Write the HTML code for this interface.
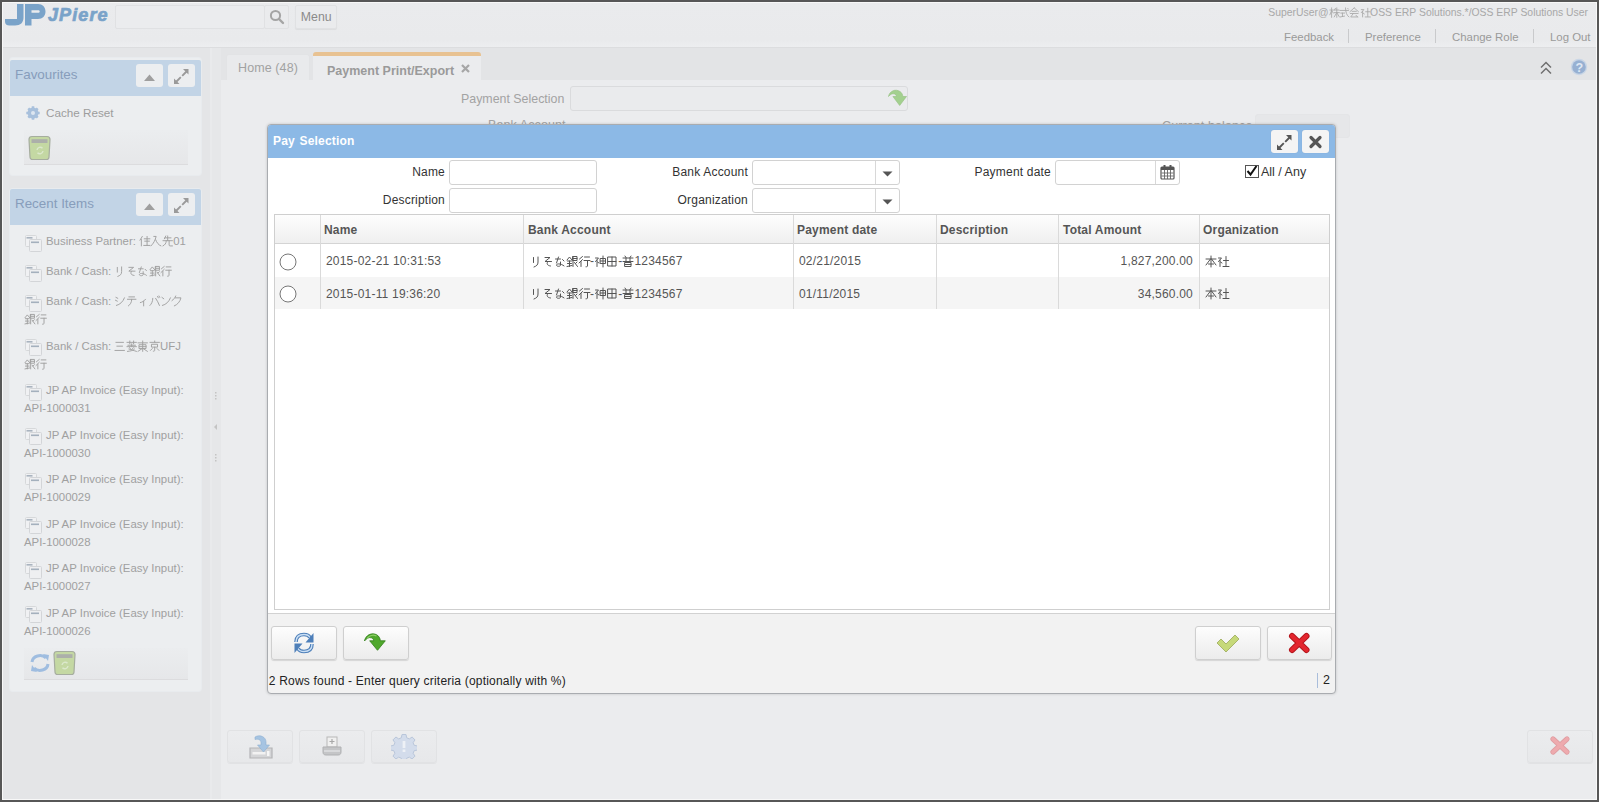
<!DOCTYPE html>
<html><head><meta charset="utf-8">
<style>
*{box-sizing:border-box;margin:0;padding:0}
html,body{width:1599px;height:802px;overflow:hidden;background:#575757}
body{font-family:"Liberation Sans",sans-serif;position:relative;font-size:12px;letter-spacing:0.2px}
.a{position:absolute}
.cj{display:inline-block;width:1em;height:1em;vertical-align:-0.13em;overflow:visible;margin-right:0}
.cj path{fill:none;stroke:currentColor;stroke-width:1;stroke-linecap:round;stroke-linejoin:round}
.t{position:absolute;white-space:nowrap;line-height:14px}
#page{left:2px;top:2px;width:1595px;height:798px;background:#f6f6f7;border:1px solid #f8f8f8}
/* header */
.hbtn{border:1px solid #e0e1e3;border-radius:2px;background:#eaebed}
.lnk{color:#9a9a9a;font-size:11.4px;letter-spacing:0}
.sep{width:1px;height:14px;background:#c9cacc}
/* left */
.panel{background:#eceef0;border-radius:3px;box-shadow:0 0 0 1px #e8ebee}
.phead{background:#c2d4e6}
.ptitle{color:#879dbb;font-size:13.4px;letter-spacing:0}
.pbtn{background:#eceef0;border-radius:3px;width:27px;height:23px}
.ritem{color:#a0a0a0;font-size:11.4px;letter-spacing:0}
/* dialog */
.lbl{color:#333;font-size:12px;text-align:right}
.inp{background:#fff;border:1px solid #d2d2d2;border-radius:3px}
.gh{color:#555;font-weight:bold;font-size:12px}
.gc{color:#555;font-size:12px}
.btn{border:1px solid #cfcfcf;border-radius:3px;background:linear-gradient(#fdfdfd,#ececec);box-shadow:0 1px 1px rgba(0,0,0,.12)}
.bbtn{border:1px solid #e1e2e4;border-radius:3px;background:linear-gradient(#ebecee,#e7e8ea);box-shadow:0 1px 0 rgba(0,0,0,.04)}
</style></head><body>
<svg width="0" height="0" style="position:absolute"><defs>
 <symbol id="winic" viewBox="0 0 18 18">
  <rect x="1.5" y="1.5" width="11" height="11" rx="1" fill="#f0f1f3" stroke="#d6d8da"/>
  <rect x="2.5" y="3" width="6" height="1.6" fill="#a9b3bf"/>
  <rect x="5.5" y="5.5" width="12" height="12" rx="1" fill="#eeeff1" stroke="#d3d5d8"/>
  <rect x="7" y="7.5" width="8" height="1.6" fill="#a4b0bd"/>
 </symbol>
</defs></svg>
<div id="page" class="a"></div>

<!-- ===== HEADER ===== -->
<div id="hdr">
 <div class="a" style="left:3px;top:3px;width:1593px;height:44px;background:linear-gradient(#eaebed,#e9eaec 85%,#edeef0)"></div>
 <!-- logo -->
 <svg class="a" style="left:0px;top:0px" width="115" height="30" viewBox="0 0 115 30">
  <g fill="#7aa3c9">
   <path d="M17 4H23.5V17.5C23.5 22.5 20.5 25.5 15 25.5H9.5C6.5 25.5 5 24 5 21.5V19H17Z"/>
   <path fill-rule="evenodd" d="M25 4H38C42.5 4 45.5 7 45.5 11.5S42.5 19 38 19H31.5V25.5H25ZM31.5 10.3V12.8H38C39.2 12.8 39.7 12.3 39.7 11.5S39.2 10.3 38 10.3Z"/>
  </g>
  <text x="48" y="21" font-family="Liberation Sans" font-weight="bold" font-style="italic" font-size="18" fill="#7aa3c9" stroke="#7aa3c9" stroke-width="0.7" letter-spacing="1.1">JPiere</text>
 </svg>
 <div class="a hbtn" style="left:115px;top:5px;width:150px;height:24px;background:#ebecee"></div>
 <div class="a hbtn" style="left:264px;top:5px;width:25px;height:24px"></div>
 <svg class="a" style="left:269px;top:9px" width="16" height="16" viewBox="0 0 16 16"><circle cx="6.5" cy="6.5" r="4.6" fill="none" stroke="#a5a5a5" stroke-width="2"/><path d="M10 10l4 4" stroke="#a5a5a5" stroke-width="2.4" stroke-linecap="round"/></svg>
 <div class="a hbtn" style="left:295px;top:5px;width:42px;height:24px;box-shadow:0 1px 1px rgba(0,0,0,.06)"></div>
 <div class="t" style="left:300.8px;top:10px;color:#8a8a8a;font-size:12.3px;letter-spacing:0">Menu</div>

 <div class="t" style="right:11px;top:6px;color:#a8a8a8;font-size:10.4px;letter-spacing:0">SuperUser@<svg class="cj" viewBox="0 0 12 12"><path d="M1 3.5h4 M3 1v11 M3 4l-2 5 M3 4l2 3 M6 3.5h5.5 M7.5 1.5l-1.2 2 M6 6.5h6 M9 1v11 M9 6.5l-3 5 M9 6.5l3 5"/></svg><svg class="cj" viewBox="0 0 12 12"><path d="M1 4h10 M2 7h4.5 M4 7v4 M1.5 11.5l5-1 M7.5 1c0 5 1.5 9 4 10.5 M10 1.5l1 1"/></svg><svg class="cj" viewBox="0 0 12 12"><path d="M6 1l-5 4.5 M6 1l5 4.5 M3.5 5h5 M1.5 7.5h9 M5 7.5l-3 4h8 M8 9.5l2 2"/></svg><svg class="cj" viewBox="0 0 12 12"><path d="M1.5 3h3l-3 3.5 M3 5v6.5 M3.5 7l1.5 1 M9 1.5v9.5 M6.5 5.5h5 M6 11.5h6"/></svg>OSS ERP Solutions.*/OSS ERP Solutions User</div>
 <div class="t lnk" style="left:1284px;top:30px">Feedback</div>
 <div class="a sep" style="left:1348px;top:29px"></div>
 <div class="t lnk" style="left:1365px;top:30px">Preference</div>
 <div class="a sep" style="left:1435px;top:29px"></div>
 <div class="t lnk" style="left:1452px;top:30px">Change Role</div>
 <div class="a sep" style="left:1533px;top:29px"></div>
 <div class="t lnk" style="left:1550px;top:30px">Log Out</div>
</div>

<!-- ===== LEFT ===== -->
<div id="left">
 <div class="a" style="left:3px;top:47px;width:207px;height:752px;background:#e4e5e7"></div>
 <div class="a" style="left:210px;top:47px;width:2px;height:752px;background:#e9eaec"></div>
 <div class="a" style="left:212px;top:47px;width:9px;height:752px;background:#e6e7e9"></div>
 <svg class="a" style="left:213px;top:390px" width="6" height="75" viewBox="0 0 6 75"><g fill="#c4c4c4"><rect x="2" y="2" width="1.5" height="1.5"/><rect x="2" y="5" width="1.5" height="1.5"/><rect x="2" y="8" width="1.5" height="1.5"/><path d="M4 34l-3 3 3 3z"/><rect x="2" y="64" width="1.5" height="1.5"/><rect x="2" y="67" width="1.5" height="1.5"/><rect x="2" y="70" width="1.5" height="1.5"/></g></svg>

 <!-- favourites -->
 <div class="a panel" style="left:10px;top:58px;width:191px;height:117px"></div>
 <div class="a phead" style="left:10px;top:59.5px;width:191px;height:36.5px;border-radius:2px 2px 0 0"></div>
 <div class="t ptitle" style="left:15px;top:68px">Favourites</div>
 <div class="a pbtn" style="left:136px;top:64px"></div>
 <svg class="a" style="left:136px;top:64px" width="27" height="23"><path d="M8 17l5.5-6.5 5.5 6.5z" fill="#9f9f9f"/></svg>
 <div class="a pbtn" style="left:168px;top:64px"></div>
 <svg class="a" style="left:168px;top:64px" width="27" height="23" viewBox="0 0 27 23"><path d="M8 18l4.8-4.8M14.2 11.8l4.8-4.8" stroke="#9a9a9a" stroke-width="1.9"/><path d="M15 5h5.5v5.5zM6 14.5v5.5h5.5z" fill="#9a9a9a"/></svg>
 <svg class="a" style="left:25px;top:105px" width="16" height="16" viewBox="0 0 16 16"><g fill="#a8c0dc"><circle cx="8" cy="8" r="5.5"/><g stroke="#a8c0dc" stroke-width="2.6"><path d="M8 1.3v13.4M1.3 8h13.4M3.3 3.3l9.4 9.4M12.7 3.3l-9.4 9.4"/></g></g><circle cx="8" cy="8" r="2" fill="#dde6f0"/></svg>
 <div class="t" style="left:46px;top:106px;color:#9d9d9d;font-size:11.7px;letter-spacing:0">Cache Reset</div>
 <div class="a" style="left:24px;top:130px;width:164px;height:35px;background:linear-gradient(#ebedef,#e6e7e9);border-bottom:1px solid #dcdcde"></div>
 <svg class="a" style="left:27px;top:135px" width="26" height="26" viewBox="0 0 26 26"><path d="M2 4.5C2 2.5 3 1.5 5 1.5h15c2 0 3 1 3 3L22 22c0 1.5-1 2.5-2.5 2.5h-14C4 24.5 3 23.5 3 22z" fill="#c4d8a3" stroke="#a6ad9f" stroke-width="1.2"/><path d="M4.5 4.2h16v3.8h-16z" fill="#acafaa"/><path d="M10 15a3.2 3.2 0 0 1 5.5-1.8M16 16a3.2 3.2 0 0 1-5.5 1.8" stroke="#dbe8cc" stroke-width="1.4" fill="none"/></svg>

 <!-- recent items -->
 <div class="a panel" style="left:10px;top:189px;width:191px;height:502px"></div>
 <div class="a phead" style="left:10px;top:189px;width:191px;height:36px;border-radius:2px 2px 0 0"></div>
 <div class="t ptitle" style="left:15px;top:197px">Recent Items</div>
 <div class="a pbtn" style="left:136px;top:193px"></div>
 <svg class="a" style="left:136px;top:193px" width="27" height="23"><path d="M8 17l5.5-6.5 5.5 6.5z" fill="#9f9f9f"/></svg>
 <div class="a pbtn" style="left:168px;top:193px"></div>
 <svg class="a" style="left:168px;top:193px" width="27" height="23" viewBox="0 0 27 23"><path d="M8 18l4.8-4.8M14.2 11.8l4.8-4.8" stroke="#9a9a9a" stroke-width="1.9"/><path d="M15 5h5.5v5.5zM6 14.5v5.5h5.5z" fill="#9a9a9a"/></svg>

  <svg class="a ic" style="left:24px;top:233.5px" width="18" height="18"><use href="#winic"/></svg>
 <div class="t ritem" style="left:46px;top:234.3px">Business Partner: <svg class="cj" viewBox="0 0 12 12"><path d="M3.5 1.5l-2.5 4 M2.5 4.5v7 M5.5 4h6 M8.5 1.5v9.5 M6 6.5h5 M5 11h6.5"/></svg><svg class="cj" viewBox="0 0 12 12"><path d="M4 1.5h2.5l-1 3c-1 3-3 5.5-4.5 7 M6 5c1 3 3 5.5 5.5 6.5"/></svg><svg class="cj" viewBox="0 0 12 12"><path d="M4 1l-1.5 3 M3 3h6.5 M6 1v5 M1 6h10 M4.5 6c0 3-1.5 4.5-3.5 5.5 M7.5 6v4.5c0 .7.4 1 1 1h2.5"/></svg>01</div>
 <svg class="a ic" style="left:24px;top:263.5px" width="18" height="18"><use href="#winic"/></svg>
 <div class="t ritem" style="left:46px;top:264.3px">Bank / Cash: <svg class="cj" viewBox="0 0 12 12"><path d="M3.5 2.5v5 M8 2v5c0 3-1.5 4-4 5"/></svg><svg class="cj" viewBox="0 0 12 12"><path d="M3 2.5h5l-5 4h6.5 M6 6.5c-1.5 1.5-1.5 4 2.5 4.5"/></svg><svg class="cj" viewBox="0 0 12 12"><path d="M1.5 4h5 M4.5 2l-2 6 M8.5 4.5l1.5 1.5 M6.5 7v3c0 1-1 1.3-2 1.3s-2-.4-2-1.2 1-1.2 2-1.2c2 0 4 .8 5.5 2"/></svg><svg class="cj" viewBox="0 0 12 12"><path d="M1 5l2.5-3 2.5 3 M1.5 6h4 M3.5 6v5.5 M1.5 8.5h4 M1 11.5l5-1 M7 1.5h4v4h-4z M7 1.5v10 M7 3.5h4 M8.5 7.5l3 4 M11 7l-1.5 1.5"/></svg><svg class="cj" viewBox="0 0 12 12"><path d="M4.5 1.5l-3 2.5 M4.5 4.5l-3.5 3.5 M3 6.5v5 M6.5 2h5 M6 5.5h6 M9.5 5.5v5.5c0 .5-.5.8-1.5.8"/></svg></div>
 <svg class="a ic" style="left:24px;top:293.5px" width="18" height="18"><use href="#winic"/></svg>
 <div class="t ritem" style="left:46px;top:294.3px">Bank / Cash: <svg class="cj" viewBox="0 0 12 12"><path d="M2 2.5l2 1 M1.5 5.5l2 1 M2.5 11c4-1 7-4 8.5-8"/></svg><svg class="cj" viewBox="0 0 12 12"><path d="M3 2h6 M1.5 4.5h9 M6 4.5c0 3.5-1.5 5.5-3.5 7"/></svg><svg class="cj" viewBox="0 0 12 12"><path d="M9 4.5c-1.5 2-3.5 3-5.5 3.5 M7 6.5v5"/></svg><svg class="cj" viewBox="0 0 12 12"><path d="M4 3.5c0 3.5-1.5 6-3 7.5 M7 3.5c1.5 2 3 5 4 7.5 M9 1.5l.8 1.5 M10.5 1l.8 1.5"/></svg><svg class="cj" viewBox="0 0 12 12"><path d="M2 2.5l2 1.5 M2.5 11c4-1 7-4 8.5-8"/></svg><svg class="cj" viewBox="0 0 12 12"><path d="M5 1c-.8 2-2.5 4-4 5 M4.5 3h6c-1 4-3.5 7-7 8.5"/></svg></div>
 <div class="t ritem" style="left:24px;top:312.3px"><svg class="cj" viewBox="0 0 12 12"><path d="M1 5l2.5-3 2.5 3 M1.5 6h4 M3.5 6v5.5 M1.5 8.5h4 M1 11.5l5-1 M7 1.5h4v4h-4z M7 1.5v10 M7 3.5h4 M8.5 7.5l3 4 M11 7l-1.5 1.5"/></svg><svg class="cj" viewBox="0 0 12 12"><path d="M4.5 1.5l-3 2.5 M4.5 4.5l-3.5 3.5 M3 6.5v5 M6.5 2h5 M6 5.5h6 M9.5 5.5v5.5c0 .5-.5.8-1.5.8"/></svg></div>
 <svg class="a ic" style="left:24px;top:338.0px" width="18" height="18"><use href="#winic"/></svg>
 <div class="t ritem" style="left:46px;top:338.8px">Bank / Cash: <svg class="cj" viewBox="0 0 12 12"><path d="M2 2.5h8 M3 6.5h6 M1 11h10"/></svg><svg class="cj" viewBox="0 0 12 12"><path d="M1 2.5h10 M4 1v3 M8 1v3 M6 4v3 M2 5.5h8 M1 7h10 M3.5 8l1.5 1.5 M8 8l-2 2 M3 9.5c2 .5 5 1.5 8 2.5 M9 9.5c-1.5 1.5-4 2.2-7.5 2.5"/></svg><svg class="cj" viewBox="0 0 12 12"><path d="M1 3h10 M6 1v11 M2.5 5h7v4h-7z M2.5 7h7 M5.5 9l-4.5 3 M6.5 9l4.5 3"/></svg><svg class="cj" viewBox="0 0 12 12"><path d="M6 1v1.5 M1 2.5h10 M3 4.5h6v3h-6z M6 7.5v3.5c0 .5-.5.8-1.5.8 M3.5 9l-2 2 M8.5 9l2 2"/></svg>UFJ</div>
 <div class="t ritem" style="left:24px;top:356.8px"><svg class="cj" viewBox="0 0 12 12"><path d="M1 5l2.5-3 2.5 3 M1.5 6h4 M3.5 6v5.5 M1.5 8.5h4 M1 11.5l5-1 M7 1.5h4v4h-4z M7 1.5v10 M7 3.5h4 M8.5 7.5l3 4 M11 7l-1.5 1.5"/></svg><svg class="cj" viewBox="0 0 12 12"><path d="M4.5 1.5l-3 2.5 M4.5 4.5l-3.5 3.5 M3 6.5v5 M6.5 2h5 M6 5.5h6 M9.5 5.5v5.5c0 .5-.5.8-1.5.8"/></svg></div>
 <svg class="a ic" style="left:24px;top:382.5px" width="18" height="18"><use href="#winic"/></svg>
 <div class="t ritem" style="left:46px;top:383.3px">JP AP Invoice (Easy Input):</div>
 <div class="t ritem" style="left:24px;top:401.3px">API-1000031</div>
 <svg class="a ic" style="left:24px;top:427.0px" width="18" height="18"><use href="#winic"/></svg>
 <div class="t ritem" style="left:46px;top:427.8px">JP AP Invoice (Easy Input):</div>
 <div class="t ritem" style="left:24px;top:445.8px">API-1000030</div>
 <svg class="a ic" style="left:24px;top:471.5px" width="18" height="18"><use href="#winic"/></svg>
 <div class="t ritem" style="left:46px;top:472.3px">JP AP Invoice (Easy Input):</div>
 <div class="t ritem" style="left:24px;top:490.3px">API-1000029</div>
 <svg class="a ic" style="left:24px;top:516.0px" width="18" height="18"><use href="#winic"/></svg>
 <div class="t ritem" style="left:46px;top:516.8px">JP AP Invoice (Easy Input):</div>
 <div class="t ritem" style="left:24px;top:534.8px">API-1000028</div>
 <svg class="a ic" style="left:24px;top:560.5px" width="18" height="18"><use href="#winic"/></svg>
 <div class="t ritem" style="left:46px;top:561.3px">JP AP Invoice (Easy Input):</div>
 <div class="t ritem" style="left:24px;top:579.3px">API-1000027</div>
 <svg class="a ic" style="left:24px;top:605.0px" width="18" height="18"><use href="#winic"/></svg>
 <div class="t ritem" style="left:46px;top:605.8px">JP AP Invoice (Easy Input):</div>
 <div class="t ritem" style="left:24px;top:623.8px">API-1000026</div>

 <div class="a" style="left:24px;top:648px;width:164px;height:32px;background:linear-gradient(#ebedef,#e6e7e9);border-bottom:1px solid #dcdcde"></div>
 <svg class="a" style="left:28px;top:651px" width="24" height="24" viewBox="0 0 24 24"><g fill="none" stroke="#9fbde0" stroke-width="3"><path d="M4 11a8 7 0 0 1 14-4"/><path d="M20 13a8 7 0 0 1-14 4"/></g><path d="M15 3l6 1-1 6z" fill="#9fbde0"/><path d="M9 21l-6-1 1-6z" fill="#9fbde0"/></svg>
 <svg class="a" style="left:52px;top:650px" width="26" height="26" viewBox="0 0 26 26"><path d="M2 4.5C2 2.5 3 1.5 5 1.5h15c2 0 3 1 3 3L22 22c0 1.5-1 2.5-2.5 2.5h-14C4 24.5 3 23.5 3 22z" fill="#c4d8a3" stroke="#a6ad9f" stroke-width="1.2"/><path d="M4.5 4.2h16v3.8h-16z" fill="#acafaa"/><path d="M10 15a3.2 3.2 0 0 1 5.5-1.8M16 16a3.2 3.2 0 0 1-5.5 1.8" stroke="#dbe8cc" stroke-width="1.4" fill="none"/></svg>
</div>

<!-- ===== MAIN ===== -->
<div id="main">
 <div class="a" style="left:221px;top:47px;width:1375px;height:33px;background:#e3e4e6"></div>
 <div class="a" style="left:221px;top:80px;width:1375px;height:719px;background:#ebecee"></div>
 <!-- tabs -->
 <div class="a" style="left:226px;top:54px;width:84px;height:26px;background:#e9eaec;border:1px solid #e2e3e5;border-bottom:none;border-radius:3px 3px 0 0"></div>
 <div class="t" style="left:238px;top:61px;color:#a2a2a2;font-size:12.5px;letter-spacing:0.1px">Home (48)</div>
 <div class="a" style="left:313px;top:52px;width:168px;height:28px;background:#ebecee;border-top:4px solid #e8c292;border-radius:3px 3px 0 0"></div>
 <div class="t" style="left:327px;top:63.5px;color:#9a9a9a;font-size:12.5px;font-weight:bold;letter-spacing:0">Payment Print/Export</div>
 <svg class="a" style="left:460px;top:63px" width="11" height="11" viewBox="0 0 11 11"><path d="M2 2l7 7M9 2l-7 7" stroke="#a6a6a6" stroke-width="2.2"/></svg>
 <!-- right icons -->
 <svg class="a" style="left:1539px;top:60px" width="14" height="15" viewBox="0 0 14 15"><path d="M2 7.5l5-5 5 5M2 13.5l5-5 5 5" fill="none" stroke="#707070" stroke-width="1.5"/></svg>
 <svg class="a" style="left:1570px;top:58px" width="18" height="18" viewBox="0 0 18 18"><circle cx="9" cy="9" r="8.2" fill="#c9d6e6"/><circle cx="9" cy="9" r="6.8" fill="#97b0d2"/><text x="9.3" y="13.6" text-anchor="middle" font-family="Liberation Sans" font-weight="bold" font-size="12.5" fill="#dfe8f4">?</text></svg>

 <!-- form under dialog -->
 <div class="t" style="left:461px;top:92px;color:#a3a3a3;font-size:12.4px;letter-spacing:0">Payment Selection</div>
 <div class="a" style="left:570px;top:86px;width:338px;height:25px;background:#eaebed;border:1px solid #dadbdd;border-radius:3px"></div>
 <svg class="a" style="left:886px;top:87px" width="22" height="22" viewBox="0 0 22 22"><path d="M2.5 9.5C3.5 4 9.5 1.5 14 4.5c1.8 1.2 2.8 3.2 2.8 5h3.7l-6.8 9-6.8-9h3.5c0-1.3-.8-2.2-2-2.6-2.2-.6-4.2.6-5.9 2.6z" fill="#a3d08f" stroke="#93c07f" stroke-width="0.6"/></svg>
 <div class="t" style="left:488px;top:118px;color:#a3a3a3;font-size:12.5px;letter-spacing:0.1px">Bank Account</div>
 <div class="t" style="left:1162px;top:119px;color:#a3a3a3;font-size:12.5px;letter-spacing:0.1px">Current balance</div>
 <div class="a" style="left:1255px;top:114px;width:95px;height:24px;background:#e6e7e9;border:1px solid #e4e5e7;border-radius:3px"></div>

 <!-- bottom buttons -->
 <div class="a bbtn" style="left:227px;top:730px;width:66px;height:33px"></div>
 <svg class="a" style="left:248px;top:733px" width="26" height="27" viewBox="0 0 26 27"><path d="M2 15h22v10H2z" fill="#d4d5d7" stroke="#b3b4b6" stroke-width="1.2"/><rect x="4.5" y="19" width="13" height="2.5" fill="#f2f2f2"/><rect x="19" y="18" width="2.5" height="5" fill="#f6f6f6"/><path d="M7 4c5-3 11 0 11 5v3h3.5l-6 7-6-7H13V9.5c0-2.5-2.5-4-6-3z" fill="#a6c4e2" stroke="#8fb0d2" stroke-width="0.6"/></svg>
 <div class="a bbtn" style="left:299px;top:730px;width:66px;height:33px"></div>
 <svg class="a" style="left:320px;top:734px" width="24" height="24" viewBox="0 0 24 24"><rect x="7" y="3" width="10" height="10" fill="#f0f0f0" stroke="#b8b8b8"/><path d="M12 5v5M9.5 7.5h5" stroke="#a8a8a8" stroke-width="1.2"/><path d="M3 13h18v5c0 2-1 3-3 3H6c-2 0-3-1-3-3z" fill="#c4c5c7" stroke="#b0b1b3"/><rect x="4" y="16" width="16" height="2" fill="#d8d9db"/></svg>
 <div class="a bbtn" style="left:371px;top:730px;width:66px;height:33px"></div>
 <svg class="a" style="left:391px;top:733px" width="26" height="26" viewBox="0 0 26 26"><path d="M11 1.5h4l.7 3.3 2.6 1.1 2.8-1.9 2.9 2.9-1.9 2.8 1.1 2.6 3.3.7v4l-3.3.7-1.1 2.6 1.9 2.8-2.9 2.9-2.8-1.9-2.6 1.1-.7 3.3h-4l-.7-3.3-2.6-1.1-2.8 1.9-2.9-2.9 1.9-2.8-1.1-2.6-3.3-.7v-4l3.3-.7 1.1-2.6-1.9-2.8 2.9-2.9 2.8 1.9 2.6-1.1z" fill="#d3dceb" stroke="#b9c6da" stroke-width="1"/><rect x="11.6" y="8" width="2.8" height="7" fill="#eef1f6"/><rect x="11.6" y="16.5" width="2.8" height="2.5" fill="#eef1f6"/></svg>
 <div class="a bbtn" style="left:1527px;top:730px;width:66px;height:33px"></div>
 <svg class="a" style="left:1548px;top:734px" width="24" height="24" viewBox="0 0 24 24"><path d="M5 5l14 13M19 5L5 18" stroke="#df9ea2" stroke-width="5.2" stroke-linecap="round"/><path d="M5 5l14 13M19 5L5 18" stroke="#eeaaae" stroke-width="3.6" stroke-linecap="round"/></svg>
</div>

<div class="a" style="left:3px;top:47px;width:1593px;height:1px;background:#dcdddf"></div>
<!-- ===== DIALOG ===== -->
<div id="dlg">
 <div class="a" style="left:267px;top:124px;width:1069px;height:570px;border:1px solid #a9acb0;border-radius:4px;background:#f2f2f2;box-shadow:0 0 3px rgba(0,0,0,.18)"></div>
 <div class="a" style="left:268px;top:125px;width:1067px;height:33px;background:#8cb9e6;border-radius:3px 3px 0 0"></div>
 <div class="t" style="left:273px;top:134.3px;color:#fff;font-size:12px;font-weight:bold;letter-spacing:0.2px;word-spacing:1px">Pay Selection</div>
 <div class="a" style="left:1271px;top:130px;width:27px;height:23px;background:#f4f4f4;border-radius:3px;box-shadow:0 0 1px rgba(0,0,0,.15)"></div>
 <svg class="a" style="left:1271px;top:130px" width="27" height="23" viewBox="0 0 27 23"><path d="M8 18l4.8-4.8M14.2 11.8l4.8-4.8" stroke="#555" stroke-width="1.9"/><path d="M15 5h5.5v5.5zM6 14.5v5.5h5.5z" fill="#555"/></svg>
 <div class="a" style="left:1302px;top:130px;width:27px;height:23px;background:#f4f4f4;border-radius:3px;box-shadow:0 0 1px rgba(0,0,0,.15)"></div>
 <svg class="a" style="left:1302px;top:130px" width="27" height="23" viewBox="0 0 27 23"><path d="M9 7.5l9 9M18 7.5l-9 9" stroke="#555" stroke-width="3.2" stroke-linecap="round"/></svg>

 <!-- body white -->
 <div class="a" style="left:268px;top:158px;width:1067px;height:456px;background:#fff;border-bottom:1px solid #d2d2d2"></div>

 <!-- search form -->
 <div class="t lbl" style="left:345px;width:100px;top:165px">Name</div>
 <div class="a inp" style="left:449px;top:160px;width:148px;height:25px"></div>
 <div class="t lbl" style="left:345px;width:100px;top:193px">Description</div>
 <div class="a inp" style="left:449px;top:188px;width:148px;height:25px"></div>

 <div class="t lbl" style="left:648px;width:100px;top:165px">Bank Account</div>
 <div class="a inp" style="left:752px;top:160px;width:148px;height:25px"></div>
 <div class="a" style="left:875px;top:161px;width:1px;height:23px;background:#d8d8d8"></div>
 <svg class="a" style="left:882px;top:169.5px" width="11" height="8"><path d="M0.5 1.5h10l-5 5z" fill="#555"/></svg>
 <div class="t lbl" style="left:648px;width:100px;top:193px">Organization</div>
 <div class="a inp" style="left:752px;top:188px;width:148px;height:25px"></div>
 <div class="a" style="left:875px;top:189px;width:1px;height:23px;background:#d8d8d8"></div>
 <svg class="a" style="left:882px;top:197.5px" width="11" height="8"><path d="M0.5 1.5h10l-5 5z" fill="#555"/></svg>

 <div class="t lbl" style="left:951px;width:100px;top:165px">Payment date</div>
 <div class="a inp" style="left:1055px;top:160px;width:125px;height:25px"></div>
 <div class="a" style="left:1155px;top:161px;width:1px;height:23px;background:#d8d8d8"></div>
 <svg class="a" style="left:1160px;top:164px" width="15" height="16" viewBox="0 0 15 16"><rect x="1" y="3" width="13" height="12" rx="1" fill="#fff" stroke="#555" stroke-width="1.2"/><rect x="1" y="3" width="13" height="3" fill="#555"/><rect x="3.5" y="1" width="2" height="4" fill="#555"/><rect x="9.5" y="1" width="2" height="4" fill="#555"/><g stroke="#666" stroke-width="0.9"><path d="M1.5 9h12M1.5 12h12M4.5 6v9M7.5 6v9M10.5 6v9"/></g></svg>
 <div class="a" style="left:1245px;top:165px;width:14px;height:13px;border:1px solid #555;background:#fff"></div>
 <svg class="a" style="left:1245px;top:164px" width="14" height="14" viewBox="0 0 14 14"><path d="M2.5 7l3 3.5 6-8.5" fill="none" stroke="#111" stroke-width="2"/></svg>
 <div class="t" style="left:1261px;top:165px;color:#333;font-size:12.5px;letter-spacing:0">All / Any</div>

 <!-- grid -->
 <div class="a" style="left:274px;top:214px;width:1056px;height:396px;border:1px solid #cfcfcf;background:#fff"></div>
 <div class="a" style="left:275px;top:215px;width:1054px;height:29px;background:linear-gradient(#fdfdfd,#efefef);border-bottom:1px solid #d4d4d4"></div>
 <div class="a" style="left:275px;top:277px;width:1054px;height:32px;background:#f5f5f5"></div>
  <div class="a" style="left:320px;top:215px;width:1px;height:94px;background:#dadada"></div>
 <div class="a" style="left:523px;top:215px;width:1px;height:94px;background:#dadada"></div>
 <div class="a" style="left:793px;top:215px;width:1px;height:94px;background:#dadada"></div>
 <div class="a" style="left:936px;top:215px;width:1px;height:94px;background:#dadada"></div>
 <div class="a" style="left:1058px;top:215px;width:1px;height:94px;background:#dadada"></div>
 <div class="a" style="left:1199px;top:215px;width:1px;height:94px;background:#dadada"></div>
 <div class="t gh" style="left:324px;top:223px">Name</div>
 <div class="t gh" style="left:528px;top:223px">Bank Account</div>
 <div class="t gh" style="left:797px;top:223px">Payment date</div>
 <div class="t gh" style="left:940px;top:223px">Description</div>
 <div class="t gh" style="left:1063px;top:223px">Total Amount</div>
 <div class="t gh" style="left:1203px;top:223px">Organization</div>

 <svg class="a" style="left:279px;top:253px" width="18" height="18"><circle cx="9" cy="9" r="8" fill="#fff" stroke="#777" stroke-width="1"/></svg>
 <svg class="a" style="left:279px;top:285px" width="18" height="18"><circle cx="9" cy="9" r="8" fill="#fff" stroke="#777" stroke-width="1"/></svg>
 <div class="t gc" style="left:326px;top:254px">2015-02-21 10:31:53</div>
 <div class="t gc" style="left:530px;top:254px"><svg class="cj" viewBox="0 0 12 12"><path d="M3.5 2.5v5 M8 2v5c0 3-1.5 4-4 5"/></svg><svg class="cj" viewBox="0 0 12 12"><path d="M3 2.5h5l-5 4h6.5 M6 6.5c-1.5 1.5-1.5 4 2.5 4.5"/></svg><svg class="cj" viewBox="0 0 12 12"><path d="M1.5 4h5 M4.5 2l-2 6 M8.5 4.5l1.5 1.5 M6.5 7v3c0 1-1 1.3-2 1.3s-2-.4-2-1.2 1-1.2 2-1.2c2 0 4 .8 5.5 2"/></svg><svg class="cj" viewBox="0 0 12 12"><path d="M1 5l2.5-3 2.5 3 M1.5 6h4 M3.5 6v5.5 M1.5 8.5h4 M1 11.5l5-1 M7 1.5h4v4h-4z M7 1.5v10 M7 3.5h4 M8.5 7.5l3 4 M11 7l-1.5 1.5"/></svg><svg class="cj" viewBox="0 0 12 12"><path d="M4.5 1.5l-3 2.5 M4.5 4.5l-3.5 3.5 M3 6.5v5 M6.5 2h5 M6 5.5h6 M9.5 5.5v5.5c0 .5-.5.8-1.5.8"/></svg>-<svg class="cj" viewBox="0 0 12 12"><path d="M1.5 3h3l-3 3.5 M3 5v6.5 M3.5 7l1.5 1 M6.5 3.5h5v5h-5z M6.5 6h5 M9 1v11"/></svg><svg class="cj" viewBox="0 0 12 12"><path d="M2 2h8v9h-8z M2 6.5h8 M6 2v9"/></svg>-<svg class="cj" viewBox="0 0 12 12"><path d="M3 1l1 1.5 M9 1l-1 1.5 M1 3h10 M4 3v3.5 M8 3v3.5 M1 6.5h10 M3 7.5h6v4h-6z M3 9.5h6"/></svg>1234567</div>
 <div class="t gc" style="left:799px;top:254px">02/21/2015</div>
 <div class="t gc" style="right:406px;top:254px">1,827,200.00</div>
 <div class="t gc" style="left:1205px;top:254px"><svg class="cj" viewBox="0 0 12 12"><path d="M1 4h10 M6 1v11 M5.5 4l-4.5 6 M6.5 4l4.5 6 M3.5 9h5"/></svg><svg class="cj" viewBox="0 0 12 12"><path d="M1.5 3h3l-3 3.5 M3 5v6.5 M3.5 7l1.5 1 M9 1.5v9.5 M6.5 5.5h5 M6 11.5h6"/></svg></div>
 <div class="t gc" style="left:326px;top:286.5px">2015-01-11 19:36:20</div>
 <div class="t gc" style="left:530px;top:286.5px"><svg class="cj" viewBox="0 0 12 12"><path d="M3.5 2.5v5 M8 2v5c0 3-1.5 4-4 5"/></svg><svg class="cj" viewBox="0 0 12 12"><path d="M3 2.5h5l-5 4h6.5 M6 6.5c-1.5 1.5-1.5 4 2.5 4.5"/></svg><svg class="cj" viewBox="0 0 12 12"><path d="M1.5 4h5 M4.5 2l-2 6 M8.5 4.5l1.5 1.5 M6.5 7v3c0 1-1 1.3-2 1.3s-2-.4-2-1.2 1-1.2 2-1.2c2 0 4 .8 5.5 2"/></svg><svg class="cj" viewBox="0 0 12 12"><path d="M1 5l2.5-3 2.5 3 M1.5 6h4 M3.5 6v5.5 M1.5 8.5h4 M1 11.5l5-1 M7 1.5h4v4h-4z M7 1.5v10 M7 3.5h4 M8.5 7.5l3 4 M11 7l-1.5 1.5"/></svg><svg class="cj" viewBox="0 0 12 12"><path d="M4.5 1.5l-3 2.5 M4.5 4.5l-3.5 3.5 M3 6.5v5 M6.5 2h5 M6 5.5h6 M9.5 5.5v5.5c0 .5-.5.8-1.5.8"/></svg>-<svg class="cj" viewBox="0 0 12 12"><path d="M1.5 3h3l-3 3.5 M3 5v6.5 M3.5 7l1.5 1 M6.5 3.5h5v5h-5z M6.5 6h5 M9 1v11"/></svg><svg class="cj" viewBox="0 0 12 12"><path d="M2 2h8v9h-8z M2 6.5h8 M6 2v9"/></svg>-<svg class="cj" viewBox="0 0 12 12"><path d="M3 1l1 1.5 M9 1l-1 1.5 M1 3h10 M4 3v3.5 M8 3v3.5 M1 6.5h10 M3 7.5h6v4h-6z M3 9.5h6"/></svg>1234567</div>
 <div class="t gc" style="left:799px;top:286.5px">01/11/2015</div>
 <div class="t gc" style="right:406px;top:286.5px">34,560.00</div>
 <div class="t gc" style="left:1205px;top:286.5px"><svg class="cj" viewBox="0 0 12 12"><path d="M1 4h10 M6 1v11 M5.5 4l-4.5 6 M6.5 4l4.5 6 M3.5 9h5"/></svg><svg class="cj" viewBox="0 0 12 12"><path d="M1.5 3h3l-3 3.5 M3 5v6.5 M3.5 7l1.5 1 M9 1.5v9.5 M6.5 5.5h5 M6 11.5h6"/></svg></div>

 <!-- footer -->
 <div class="a btn" style="left:271px;top:626px;width:66px;height:34px"></div>
 <svg class="a" style="left:292px;top:631px" width="24" height="24" viewBox="0 0 24 24"><g fill="none" stroke-linecap="butt"><path d="M4 11C4 6 7 3.5 12 3.5c3 0 5 1 6 3" stroke="#4d7fb9" stroke-width="3.6"/><path d="M20 13c0 5-3 7.5-8 7.5-3 0-5-1-6-3" stroke="#4d7fb9" stroke-width="3.6"/><path d="M4 11C4 6 7 3.5 12 3.5c3 0 5 1 6 3" stroke="#c9def4" stroke-width="1.4"/><path d="M20 13c0 5-3 7.5-8 7.5-3 0-5-1-6-3" stroke="#c9def4" stroke-width="1.4"/></g><path d="M21.5 2v9.5h-8z" fill="#4d7fb9"/><path d="M2.5 22v-9.5h8z" fill="#4d7fb9"/></svg>
 <div class="a btn" style="left:343px;top:626px;width:66px;height:34px"></div>
 <svg class="a" style="left:362px;top:631px" width="27" height="23" viewBox="0 0 27 23"><path d="M2.5 10C3.5 4 10 1 15 4c2 1.2 3.3 3.5 3.3 5.8h5l-7.8 9.5-7.8-9.5h4c0-1.5-1-2.5-2.3-3-2.6-.8-5 .6-6.9 3.2z" fill="#4fa82c" stroke="#2f7d17" stroke-width="0.8" stroke-linejoin="round"/><path d="M5 7.5C7 4.5 11 3.3 14.5 5" stroke="#8fd06a" stroke-width="1.2" fill="none"/></svg>
 <div class="a btn" style="left:1195px;top:626px;width:66px;height:34px"></div>
 <svg class="a" style="left:1214px;top:632px" width="28" height="22" viewBox="0 0 28 22"><path d="M3 11l4-4 5 5L21 3l4 4-13 13z" fill="#c6d97a" stroke="#a3b063" stroke-width="0.9" stroke-linejoin="round"/></svg>
 <div class="a btn" style="left:1267px;top:626px;width:65px;height:34px"></div>
 <svg class="a" style="left:1287px;top:631px" width="25" height="25" viewBox="0 0 25 25"><path d="M5 5l14.5 14M19.5 5L5 19" stroke="#b3151c" stroke-width="6" stroke-linecap="round"/><path d="M5 5l14.5 14M19.5 5L5 19" stroke="#e3262e" stroke-width="4.2" stroke-linecap="round"/></svg>

 <div class="t" style="left:268.8px;top:674px;color:#222;font-size:12px;letter-spacing:0.2px">2 Rows found - Enter query criteria (optionally with %)</div>
 <div class="a" style="left:1317px;top:673px;width:1px;height:15px;background:#a9bddb"></div>
 <div class="t" style="left:1323px;top:673px;color:#222;font-size:12.5px;letter-spacing:0">2</div>
</div>
</body></html>
